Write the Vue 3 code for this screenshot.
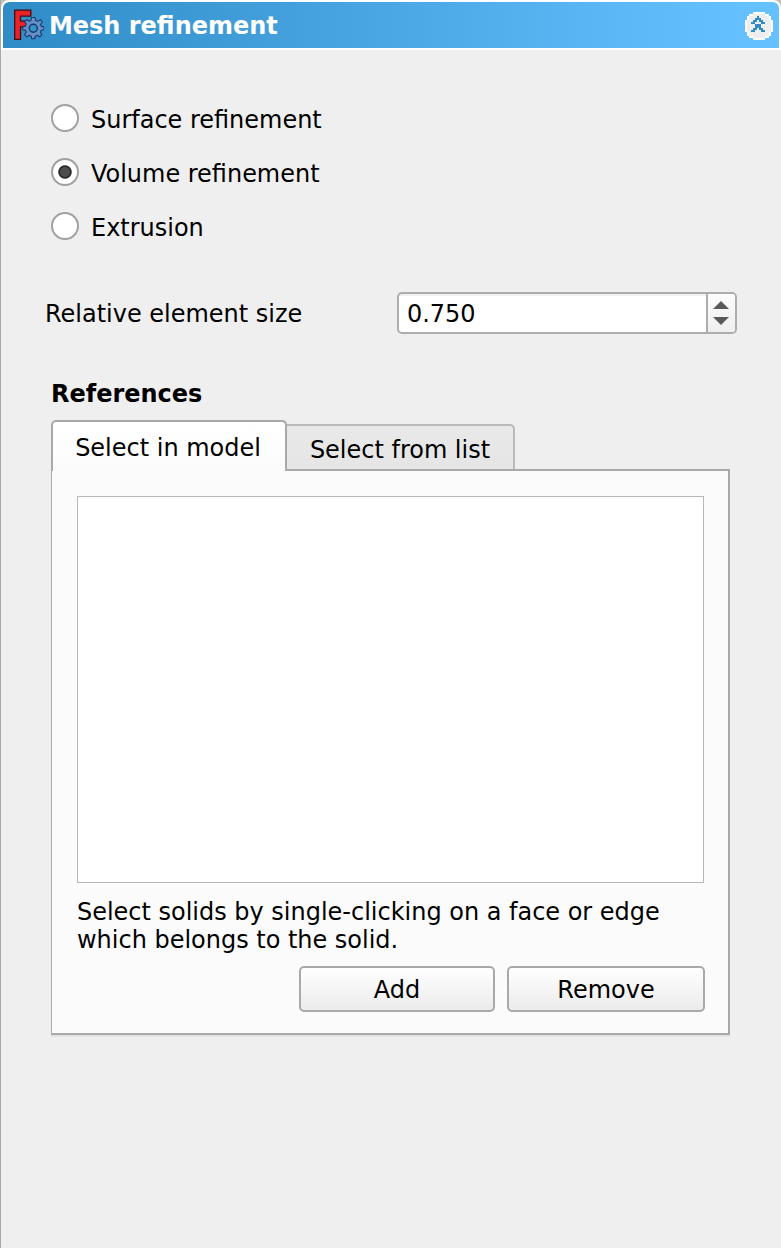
<script setup>
import { ref } from 'vue'

const modes = ['Surface refinement', 'Volume refinement', 'Extrusion']
const mode = ref('Volume refinement')
const tabs = ['Select in model', 'Select from list']
const activeTab = ref('Select in model')
const size = ref('0.750')
</script>

<template>
  <main class="panel">
    <header class="title">
      <div class="title-bar">
        <svg class="logo" viewBox="0 0 32 32" width="32" height="32">
          <path d="M2.7 1.2H18.8V7.1H8.5V12.2H15.5V18H8.5V30.3H2.7Z" fill="#e8242a" stroke="#450b10" stroke-width="1.3" />
          <g transform="translate(21.3 19.2)">
            <path
              d="M-1.8-10.7H1.8L2.4-7.7L4.4-6.8L7-8.5L9.1-6.2L7.2-3.7L8-1.8L10.6-1.6V1.6L8 2L7.1 4L8.6 6.5L6.2 8.7L4 7.1L2 8L1.5 10.6H-1.6L-2.1 8L-4 7.1L-6.5 8.7L-8.7 6.3L-7.1 3.9L-8 1.9L-10.6 1.5V-1.6L-7.9-2.1L-7-4.1L-8.7-6.5L-6.4-8.6L-4-7L-2.3-7.8Z"
              fill="#648fc8" stroke="#173966" stroke-width="1.1" stroke-linejoin="round" />
            <circle r="4" fill="#3791cc" stroke="#173966" stroke-width="1.4" />
          </g>
        </svg>
        <h1>Mesh refinement</h1>
        <svg class="collapse" viewBox="0 0 14 14" width="28" height="28" shape-rendering="crispEdges">
          <path d="M4 0h6v1h2v1h1v2h1v6h-1v2h-1v1h-2v1H4v-1H2v-1H1v-2H0V4h1V2h1V1h2z" fill="#fff" />
          <path d="M4 1h6v1h2v2h1v6h-1v2h-2v1H4v-1H2v-2H1V4h1V2h2z" fill="#eee" />
          <path
            d="M6 2h1v1h1v1h1v1h1v1H8V5H7V4H6v1H5v1H3V5h1V4h1V3h1zM5 6h3v2h1v1h1v1H8V9H7V8H6v1H5v1H3V9h1V8h1z"
            fill="#2f8bc8" />
        </svg>
      </div>
    </header>

    <section class="body">
      <div class="modes">
        <label v-for="item in modes" :key="item" class="mode">
          <span class="radio" :class="{ checked: item === mode }" @click="mode = item"></span>
          <span class="mode-text">{{ item }}</span>
        </label>
      </div>

      <div class="size-row">
        <span class="size-label">Relative element size</span>
        <div class="spin">
          <span class="value">{{ size }}</span>
          <span class="steps">
            <svg viewBox="0 0 27 38" width="27" height="38">
              <path d="M5 15L13 7L21 15ZM5 23L13 31L21 23Z" fill="#5a5a5a" />
            </svg>
          </span>
        </div>
      </div>

      <h2>References</h2>
      <div class="tabs">
        <button v-for="tab in tabs" :key="tab" class="tab" :class="{ active: tab === activeTab }" @click="activeTab = tab">{{ tab }}</button>
      </div>
      <div class="page">
        <div class="list"></div>
        <p>Select solids by single-clicking on a face or edge which belongs to the solid.</p>
        <div class="actions">
          <button class="btn add">Add</button>
          <button class="btn remove">Remove</button>
        </div>
      </div>
    </section>
  </main>
</template>

<style>
body {
  margin: 0;
  background: #eee;
}
</style>

<style scoped>
* {
  box-sizing: border-box;
}
.panel {
  width: 781px;
  height: 1248px;
  overflow: hidden;
  background: #efefef;
  border-left: 1px solid #a8a8a8;
  font: 23.97px/28px "DejaVu Sans", sans-serif;
  color: #000;
}
.title {
  height: 50px;
  background: #c0c0c0;
}
.title-bar {
  display: flex;
  align-items: center;
  height: 50px;
  padding: 2px 6px 0 9px;
  border: 2px solid #fff;
  border-radius: 8px 8px 0 0;
  background: linear-gradient(90deg, #308cc6, #64c0ff 95%) padding-box;
}
.logo {
  flex: none;
  margin: -2px 5px 0 0;
}
h1,
h2 {
  margin: 0;
  font-size: 23.97px;
  line-height: 28px;
  font-weight: bold;
}
h1 {
  flex: 1;
  color: #fff;
}
.body {
  padding: 54px 44px 0;
}
.modes {
  display: flex;
  flex-direction: column;
  gap: 26px;
  padding-left: 6px;
}
.mode {
  display: flex;
  height: 28px;
  gap: 12px;
}
.radio {
  width: 28px;
  height: 28px;
  border: 2px solid #a1a1a1;
  border-radius: 50%;
  background: #fff;
}
.radio.checked {
  background: radial-gradient(circle, #4d4d4d 4.5px, #272727 5.5px, #272727 6.2px, #fff 7.2px);
}
.mode-text {
  padding-top: 2px;
}
.size-row {
  display: flex;
  align-items: center;
  justify-content: space-between;
  height: 42px;
  margin-top: 52px;
}
.size-label {
  padding-top: 2px;
}
.spin {
  display: flex;
  width: 340px;
  height: 42px;
  border: 2px solid #adadad;
  border-radius: 5px;
  background: linear-gradient(#f0f0f0 0 2px, #fff 2px);
  overflow: hidden;
}
.value {
  flex: 1;
  padding: 6px 8px 4px;
}
.steps {
  width: 29px;
  border-left: 2px solid #adadad;
  background: linear-gradient(#fcfcfc, #efefef);
}
.steps svg {
  display: block;
}
h2 {
  margin: 46px 0 0 6px;
}
.tabs {
  display: flex;
  align-items: flex-end;
  height: 51px;
  margin: 12px 0 0 6px;
}
.tab {
  width: 228px;
  height: 45px;
  margin-bottom: 2px;
  padding: 4px 0 0;
  border: 2px solid #bababa;
  border-left: 0;
  border-bottom: 0;
  border-radius: 0 5px 0 0;
  background: linear-gradient(#e9e9e9, #e5e5e5);
  font: inherit;
  color: #000;
}
.tab.active {
  z-index: 1;
  width: 236px;
  height: 51px;
  margin-bottom: 0;
  padding: 2px 2px 0 0;
  border: 2px solid #a9a9a9;
  border-bottom: 0;
  border-radius: 5px 5px 0 0;
  background: linear-gradient(#fff, #fbfbfb);
}
.page {
  width: 679px;
  height: 566px;
  margin: -2px 0 0 6px;
  padding: 25px 23px 0 25px;
  border: 2px solid #a9a9a9;
  border-left-width: 1px;
  box-shadow: 0 2px #e2e2e2;
  background: #fbfbfb;
}
.list {
  width: 627px;
  height: 387px;
  border: 1px solid #b7b7b7;
  background: #fff;
}
p {
  margin: 15px 0 12px;
}
.actions {
  display: flex;
  justify-content: flex-end;
  gap: 12px;
}
.btn {
  width: 198px;
  height: 46px;
  padding: 2px 0 0;
  border: 2px solid #a9a9a9;
  border-radius: 5px;
  background: linear-gradient(#fff, #ebebeb);
  font: inherit;
  color: #000;
}
.add {
  width: 196px;
}
</style>
